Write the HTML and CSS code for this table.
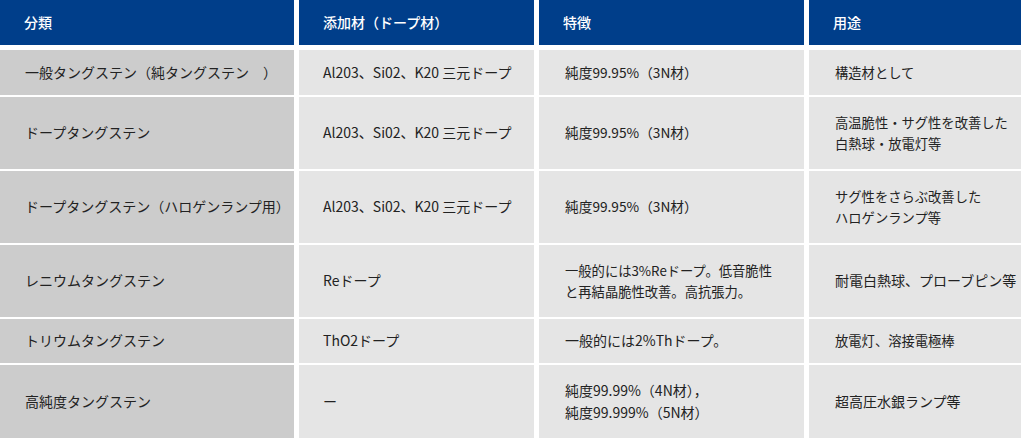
FILE: index.html
```html
<!DOCTYPE html>
<html lang="ja">
<head>
<meta charset="utf-8">
<title>タングステンの種類</title>
<link rel="stylesheet" href="styles.css">
</head>
<body>
<div class="spec-table">
  <div class="row head">
    <div class="cell">分類</div>
    <div class="cell">添加材（ドープ材）</div>
    <div class="cell">特徴</div>
    <div class="cell">用途</div>
  </div>
  <div class="row short">
    <div class="cell name">一般タングステン（純タングステン　）</div>
    <div class="cell dope">Al203、Si02、K20 三元ドープ</div>
    <div class="cell feat md">純度99.95%（3N材）</div>
    <div class="cell use">構造材として</div>
  </div>
  <div class="row tall">
    <div class="cell name">ドープタングステン</div>
    <div class="cell dope">Al203、Si02、K20 三元ドープ</div>
    <div class="cell feat md">純度99.95%（3N材）</div>
    <div class="cell use">高温脆性・サグ性を改善した<br>白熱球・放電灯等</div>
  </div>
  <div class="row tall">
    <div class="cell name">ドープタングステン（ハロゲンランプ用）</div>
    <div class="cell dope">Al203、Si02、K20 三元ドープ</div>
    <div class="cell feat md">純度99.95%（3N材）</div>
    <div class="cell use">サグ性をさらぶ改善した<br>ハロゲンランプ等</div>
  </div>
  <div class="row tall">
    <div class="cell name">レニウムタングステン</div>
    <div class="cell dope">Reドープ</div>
    <div class="cell feat">一般的には3%Reドープ。低音脆性<br>と再結晶脆性改善。高抗張力。</div>
    <div class="cell use lg">耐電白熱球、プローブピン等</div>
  </div>
  <div class="row short2">
    <div class="cell name">トリウムタングステン</div>
    <div class="cell dope">ThO2ドープ</div>
    <div class="cell feat lg">一般的には2%Thドープ。</div>
    <div class="cell use">放電灯、溶接電極棒</div>
  </div>
  <div class="row last">
    <div class="cell name">高純度タングステン</div>
    <div class="cell dope">ー</div>
    <div class="cell feat lg">純度99.99%（4N材），<br>純度99.999%（5N材）</div>
    <div class="cell use lg">超高圧水銀ランプ等</div>
  </div>
</div>
</body>
</html>
```

FILE: styles.css
```css
html, body {
  margin: 0;
  padding: 0;
  background: #ffffff;
}

body {
  font-family: "Noto Sans CJK JP", "Noto Sans", sans-serif;
  font-size: 13.3px;
  line-height: 21.5px;
  color: #222222;
}

.spec-table {
  display: flex;
  flex-direction: column;
  gap: 2px;
  width: 1021px;
}

.row {
  display: grid;
  grid-template-columns: 294px 235px 265px 1fr;
  column-gap: 5px;
}

.row.head {
  height: 45px;
  margin-bottom: 3px;
}

.row.short { height: 45px; }
.row.tall { height: 72px; }
.row.short2 { height: 44px; }
.row.last { height: 73px; }

.cell {
  display: flex;
  align-items: center;
  padding: 0 24px;
  background: #e5e5e5;
  white-space: nowrap;
}

.cell.name {
  background: #cccccc;
  font-size: 14px;
  padding-left: 25px;
}

.cell.dope {
  font-size: 14px;
}

.cell.feat,
.cell.use {
  padding-left: 26px;
}

.cell.md {
  font-size: 13.7px;
}

.cell.lg {
  font-size: 14px;
}

.head .cell {
  background: #003e8a;
  color: #ffffff;
  font-size: 14px;
  font-weight: 500;
}
```
